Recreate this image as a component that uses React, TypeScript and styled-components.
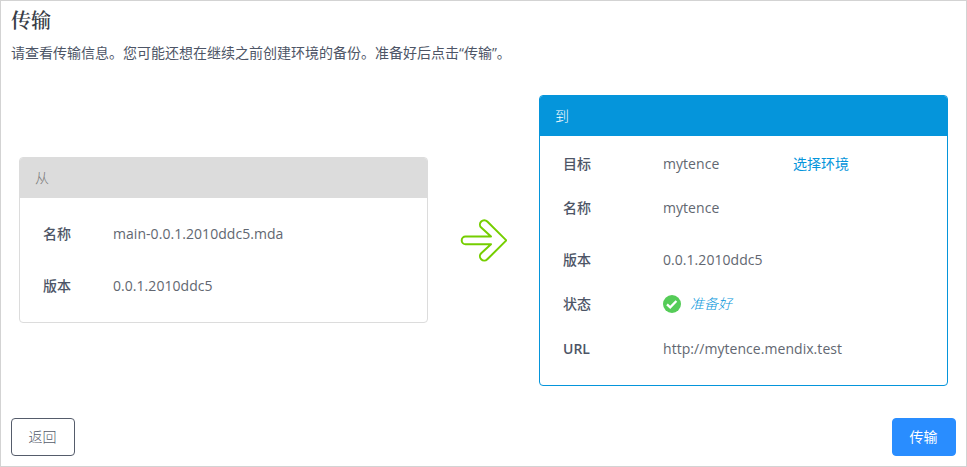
import React from 'react';
import styled, { createGlobalStyle } from 'styled-components';

const GlobalStyle = createGlobalStyle`
  * { box-sizing: border-box; }
  body {
    margin: 0;
    background: #fff;
    color: #4d5566;
    font: 14px/20px "Open Sans", "Noto Sans CJK SC", sans-serif;
  }
`;

const Page = styled.main`
  display: flex;
  flex-direction: column;
  width: 967px;
  height: 467px;
  padding: 7px 10px 10px;
  border: 1px solid #d3d3d3;
`;

const Title = styled.h1`
  margin: 0;
  font: 600 20px/24px "Noto Serif CJK SC", "Noto Sans CJK SC", serif;
  color: #373c46;
`;

const Intro = styled.p`
  margin: 11px 0 0;
  font-weight: 400;
  white-space: nowrap;
  color: #4d5566;
`;

const Transfer = styled.section`
  display: grid;
  grid-template-columns: 409px 111px 409px;
  align-items: center;
  height: 291px;
  margin: 32px 0 0 8px;
`;

const Card = styled.article<{ $color: string; $height: number }>`
  height: ${({ $height }) => $height}px;
  border: 1px solid ${({ $color }) => $color};
  border-radius: 4px;
  overflow: hidden;
`;

const SourceCard = styled(Card)`
  align-self: start;
  margin-top: 62px;
`;

const CardHeader = styled.header<{ $background: string; $color: string }>`
  height: 40px;
  padding: 0 15px;
  line-height: 40px;
  font-weight: 300;
  background: ${({ $background }) => $background};
  color: ${({ $color }) => $color};
`;

const Details = styled.dl<{ $rows: string }>`
  display: grid;
  grid-template-rows: ${({ $rows }) => $rows};
  margin: 0;
  padding: 6px 23px 0;
`;

const Row = styled.div`
  display: grid;
  grid-template-columns: 70px 1fr;
  align-items: center;
`;

const WideRow = styled(Row)`
  grid-template-columns: 100px 130px 1fr;
`;

const Label = styled.dt<{ $weight?: number }>`
  font-weight: ${({ $weight = 500 }) => $weight};
  color: #4d5566;
`;

const Value = styled.dd`
  display: flex;
  align-items: center;
  margin: 0;
  letter-spacing: 0.05px;
  color: #626771;
  white-space: nowrap;
`;

const Link = styled.a`
  color: #0595db;
`;

const Status = styled.em`
  margin-left: 9px;
  font-weight: 300;
  color: #0595db;
`;

const ArrowSlot = styled.div`
  display: flex;
  justify-content: center;
`;

const Actions = styled.footer`
  display: flex;
  justify-content: space-between;
  margin-top: auto;
`;

const Button = styled.button<{ $primary?: boolean }>`
  width: 64px;
  height: 38px;
  padding: 0 1px 2px 0;
  border: 1px solid ${({ $primary }) => ($primary ? '#298dff' : '#555c6b')};
  border-radius: 4px;
  background: ${({ $primary }) => ($primary ? '#298dff' : '#fff')};
  color: ${({ $primary }) => ($primary ? '#fff' : '#555c6b')};
  font: ${({ $primary }) => ($primary ? 400 : 300)} 14px/20px "Noto Sans CJK SC", sans-serif;
`;

const Arrow = () => (
  <svg width="47" height="45" viewBox="0 0 47 45" fill="none" aria-hidden="true">
    <path
      d="M46.3 22.4 27.3 41.3A4.3 4.3 0 0 1 21.2 35.2L31 26.2H5.5A3.8 3.8 0 0 1 5.5 18.6H31L21.2 9.6A4.3 4.3 0 0 1 27.3 3.5Z"
      stroke="#75ce00"
      strokeWidth="2"
      strokeLinejoin="round"
    />
  </svg>
);

const Check = () => (
  <svg width="18" height="18" viewBox="0 0 18 18" aria-hidden="true">
    <circle cx="9" cy="9" r="9" fill="#55cc58" />
    <path d="m4 9.4 3.2 3L13.4 6" fill="none" stroke="#fff" strokeWidth="2.3" />
  </svg>
);

export default function App() {
  return (
    <>
      <GlobalStyle />
      <Page>
        <Title>传输</Title>
        <Intro>请查看传输信息。您可能还想在继续之前创建环境的备份。准备好后点击“传输”。</Intro>
        <Transfer>
          <SourceCard $color="#dcdcdc" $height={166}>
            <CardHeader $background="#dcdcdc" $color="#777">从</CardHeader>
            <Details $rows="60px 44px">
              <Row><Label>名称</Label><Value>main-0.0.1.2010ddc5.mda</Value></Row>
              <Row><Label>版本</Label><Value>0.0.1.2010ddc5</Value></Row>
            </Details>
          </SourceCard>
          <ArrowSlot><Arrow /></ArrowSlot>
          <Card $color="#0595db" $height={291}>
            <CardHeader $background="#0595db" $color="#fff">到</CardHeader>
            <Details $rows="44px 44px 60px 28px 62px">
              <WideRow><Label>目标</Label><Value>mytence</Value><Link>选择环境</Link></WideRow>
              <WideRow><Label>名称</Label><Value>mytence</Value></WideRow>
              <WideRow><Label>版本</Label><Value>0.0.1.2010ddc5</Value></WideRow>
              <WideRow><Label>状态</Label><Value><Check /><Status>准备好</Status></Value></WideRow>
              <WideRow><Label $weight={600}>URL</Label><Value>http://mytence.mendix.test</Value></WideRow>
            </Details>
          </Card>
        </Transfer>
        <Actions>
          <Button>返回</Button>
          <Button $primary>传输</Button>
        </Actions>
      </Page>
    </>
  );
}
